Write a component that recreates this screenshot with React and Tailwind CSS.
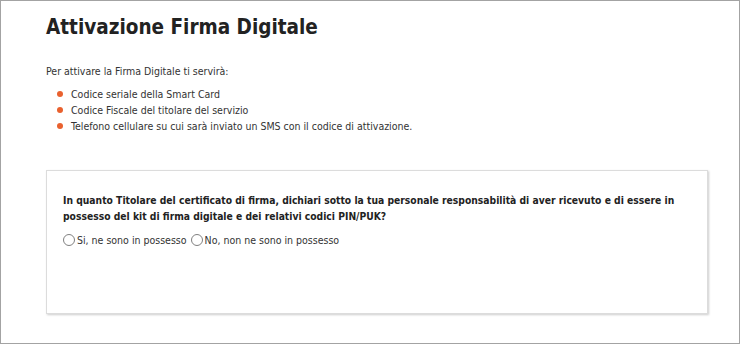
import React, { useState } from "react";

const items = [
  "Codice seriale della Smart Card",
  "Codice Fiscale del titolare del servizio",
  "Telefono cellulare su cui sarà inviato un SMS con il codice di attivazione.",
];

const Radio = ({ checked, onClick, label }) => (
  <label className="flex items-center cursor-pointer" onClick={onClick}>
    <span className="w-[12px] h-[12px] rounded-full border border-[#808080] bg-white flex items-center justify-center mr-[2px]">
      {checked && <span className="w-[6px] h-[6px] rounded-full bg-[#333]" />}
    </span>
    <span>{label}</span>
  </label>
);

export default function App() {
  const [choice, setChoice] = useState(null);

  return (
    <div className="w-[740px] h-[344px] border border-[#a3a3a3] bg-white text-[#333] font-['DejaVu_Sans_Condensed','DejaVu_Sans',sans-serif] overflow-hidden">
      <div className="pl-[45px] pr-[31px]">
        <h1 className="mt-[13px] text-[20.5px] leading-[26px] font-bold text-[#222]">
          Attivazione Firma Digitale
        </h1>

        <p className="mt-[24px] text-[10.5px] leading-[14px]">
          Per attivare la Firma Digitale ti servirà:
        </p>

        <ul className="mt-[8px] pl-[11px] text-[10.5px] leading-[16px]">
          {items.map((item) => (
            <li key={item} className="flex items-center">
              <span className="w-[6px] h-[6px] rounded-full bg-[#e9612e] mr-[8px]" />
              {item}
            </li>
          ))}
        </ul>

        {/* dichiarazione */}
        <div className="mt-[36px] h-[144px] border border-[#dcdcdc] shadow-[1px_1px_2px_rgba(0,0,0,0.2)] px-[16px] pt-[21px]">
          <p className="text-[10.25px] leading-[16px] font-bold text-[#222]">
            In quanto Titolare del certificato di firma, dichiari sotto la tua
            personale responsabilità di aver ricevuto e di essere in possesso
            del kit di firma digitale e dei relativi codici PIN/PUK?
          </p>
          <div className="mt-[9px] flex items-center gap-[4px] text-[10.5px] leading-[14px]">
            <Radio
              checked={choice === "si"}
              onClick={() => setChoice("si")}
              label="Si, ne sono in possesso"
            />
            <Radio
              checked={choice === "no"}
              onClick={() => setChoice("no")}
              label="No, non ne sono in possesso"
            />
          </div>
        </div>
      </div>
    </div>
  );
}
